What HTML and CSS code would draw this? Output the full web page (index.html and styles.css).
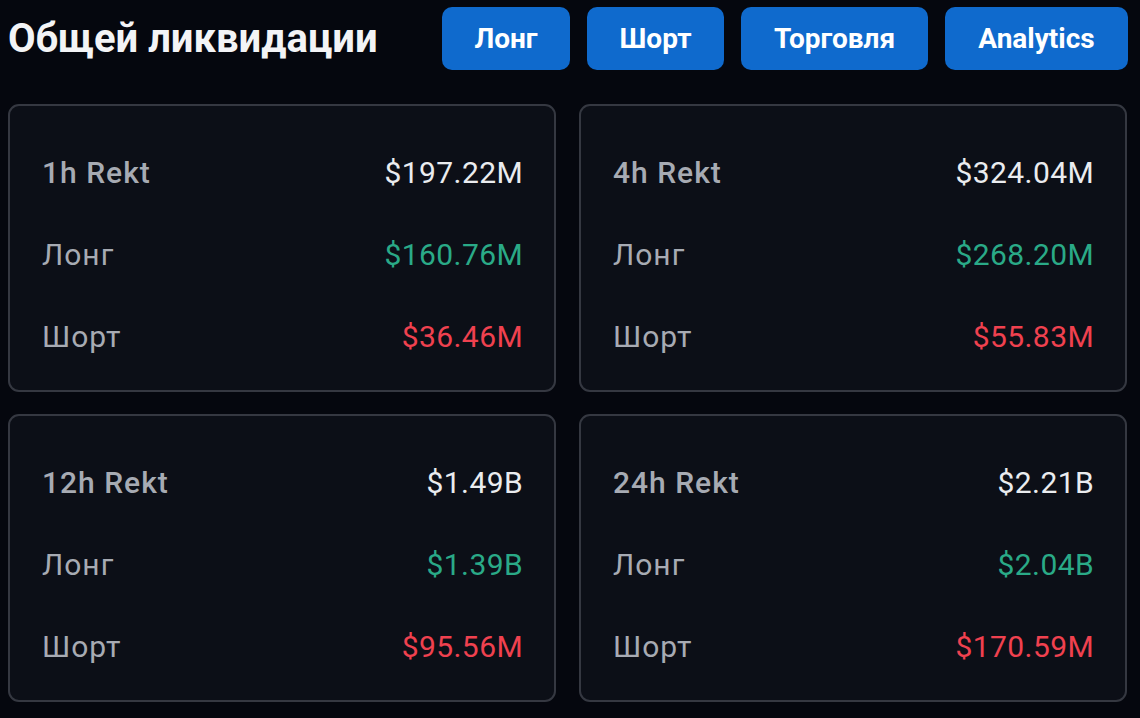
FILE: index.html
```html
<!DOCTYPE html>
<html lang="ru">
<head>
<meta charset="utf-8">
<link rel="stylesheet" href="styles.css">
</head>
<body>
<div class="page">
  <header class="top">
    <h1 class="title">Общей ликвидации</h1>
    <nav class="tabs">
      <button class="tab tab-long">Лонг</button>
      <button class="tab tab-short">Шорт</button>
      <button class="tab tab-trade">Торговля</button>
      <button class="tab tab-analytics">Analytics</button>
    </nav>
  </header>
  <main class="grid">
    <section class="card">
      <div class="row"><span class="label head">1h Rekt</span><span class="val total">$197.22M</span></div>
      <div class="row"><span class="label">Лонг</span><span class="val up">$160.76M</span></div>
      <div class="row"><span class="label">Шорт</span><span class="val down">$36.46M</span></div>
    </section>
    <section class="card">
      <div class="row"><span class="label head">4h Rekt</span><span class="val total">$324.04M</span></div>
      <div class="row"><span class="label">Лонг</span><span class="val up">$268.20M</span></div>
      <div class="row"><span class="label">Шорт</span><span class="val down">$55.83M</span></div>
    </section>
    <section class="card">
      <div class="row"><span class="label head">12h Rekt</span><span class="val total">$1.49B</span></div>
      <div class="row"><span class="label">Лонг</span><span class="val up">$1.39B</span></div>
      <div class="row"><span class="label">Шорт</span><span class="val down">$95.56M</span></div>
    </section>
    <section class="card">
      <div class="row"><span class="label head">24h Rekt</span><span class="val total">$2.21B</span></div>
      <div class="row"><span class="label">Лонг</span><span class="val up">$2.04B</span></div>
      <div class="row"><span class="label">Шорт</span><span class="val down">$170.59M</span></div>
    </section>
  </main>
</div>
</body>
</html>
```

FILE: styles.css
```css
* { box-sizing: border-box; }
html, body { margin: 0; padding: 0; }
body {
  background: #05070e;
  font-family: Roboto, "Noto Sans", sans-serif;
  color: #eaecef;
  width: 1140px;
  height: 718px;
  overflow: hidden;
}
.page {
  padding: 7px 12px 0 8px;
}
.top {
  display: flex;
  align-items: center;
  justify-content: space-between;
  height: 63px;
}
.title {
  margin: 0;
  font-size: 40px;
  font-weight: 700;
  color: #f3f4f6;
  letter-spacing: 0;
}
.tabs {
  display: flex;
  gap: 17px;
}
.tab {
  height: 63px;
  border: 0;
  border-radius: 10px;
  background: #0f6acd;
  color: #ffffff;
  font-family: Roboto, "Noto Sans", sans-serif;
  font-size: 28px;
  font-weight: 700;
  padding: 0;
}
.tab-long { width: 128px; }
.tab-short { width: 137px; }
.tab-trade { width: 187px; }
.tab-analytics { width: 183px; }
.grid {
  margin-top: 34px;
  display: grid;
  grid-template-columns: 548px 548px;
  column-gap: 23px;
  row-gap: 22px;
}
.card {
  height: 288px;
  border: 2px solid #353841;
  border-radius: 11px;
  background: #0c0f17;
  padding: 46px 31px 33px 32px;
  display: flex;
  flex-direction: column;
  gap: 42px;
}
.row {
  display: flex;
  justify-content: space-between;
  align-items: center;
  height: 40px;
  font-size: 30px;
}
.label {
  color: #a7abb3;
  font-weight: 400;
  letter-spacing: 1px;
}
.label.head {
  font-weight: 500;
}
.val { font-weight: 400; letter-spacing: 0.4px; }
.total { color: #eaecef; }
.up { color: #2aaa87; }
.down { color: #f0414f; }
```
